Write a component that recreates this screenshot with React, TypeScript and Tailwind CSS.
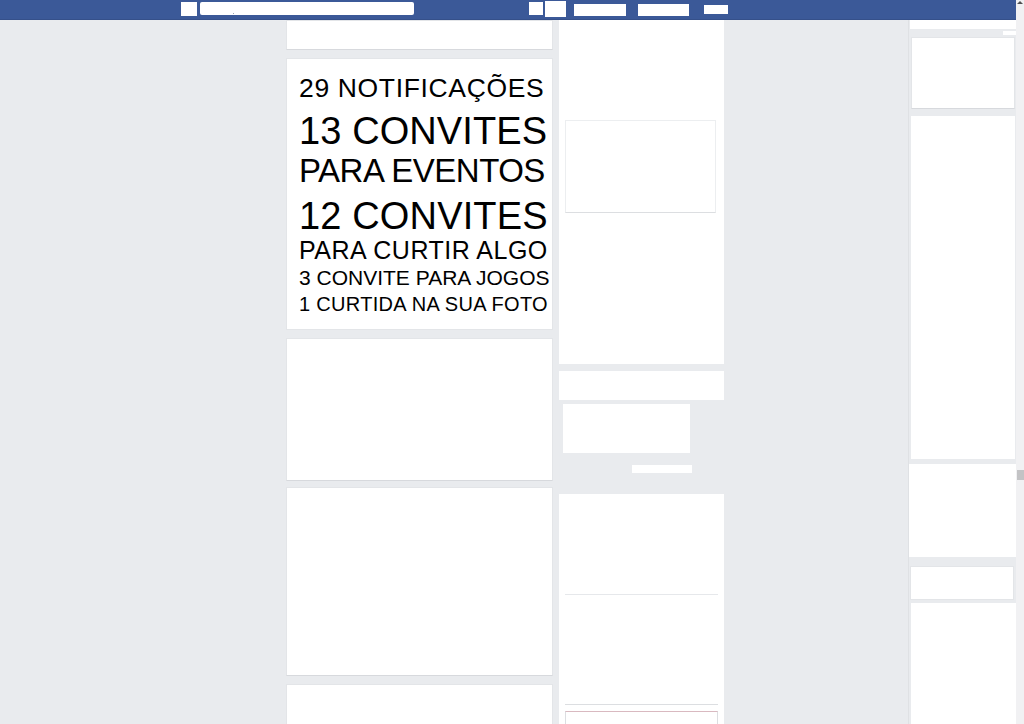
const lines = [
  { text: "29 NOTIFICAÇÕES", cls: "text-[26.5px] tracking-[0.65px]" },
  { text: "13 CONVITES", cls: "mt-[10px] text-[38px] tracking-[0.1px]" },
  { text: "PARA EVENTOS", cls: "mt-[4px] text-[33px] tracking-[-0.5px]" },
  { text: "12 CONVITES", cls: "mt-[10px] text-[38px] tracking-[0.15px]" },
  { text: "PARA CURTIR ALGO", cls: "mt-[3.5px] text-[25px] tracking-[0.5px]" },
  { text: "3 CONVITE PARA JOGOS", cls: "mt-[3.5px] text-[21px] tracking-[0px]" },
  { text: "1 CURTIDA NA SUA FOTO", cls: "mt-[6.8px] text-[20px] tracking-[0.3px]" },
];

function TopBar() {
  return (
    <header className="flex h-[20px] shrink-0 items-start border-b border-[#35508a] bg-[#3b5998]">
      <div className="ml-[181px] mt-[2px] h-[14px] w-[16px] bg-white" />
      <div className="relative ml-[3px] mt-[2px] h-[13px] w-[214px] rounded-[2px] bg-white">
        <span className="absolute left-[33px] top-[11px] h-px w-px bg-[#9aa3b5]" />
      </div>
      <div className="ml-[115px] mt-[2px] h-[13px] w-[14px] bg-white" />
      <div className="ml-[2px] mt-[1px] h-[16px] w-[21px] bg-white" />
      <div className="ml-[8px] mt-[4px] h-[12px] w-[52px] bg-white" />
      <div className="ml-[12px] mt-[4px] h-[12px] w-[51px] bg-white" />
      <div className="ml-[15px] mt-[5px] h-[9px] w-[24px] bg-white" />
    </header>
  );
}

function Card({ className = "" }: { className?: string }) {
  return (
    <div className={`border border-[#e3e5e8] border-b-[#d7d9dd] bg-white ${className}`} />
  );
}

function FeedColumn() {
  return (
    <div className="flex w-[267px] shrink-0 flex-col">
      <Card className="h-[30px]" />

      {/* Notifications card */}
      <div className="mt-[8px] h-[272px] border border-[#e3e5e8] bg-white pl-[12px] pt-[16px] font-['Liberation_Sans',Arial,sans-serif] text-black">
        {lines.map((line, index) => (
          <div key={index} className={`whitespace-nowrap leading-none ${line.cls}`}>
            {line.text}
          </div>
        ))}
      </div>

      <Card className="mt-[8px] h-[143px]" />
      <Card className="mt-[6px] h-[189px]" />
      <Card className="mt-[8px] h-[60px]" />
    </div>
  );
}

function MiddleColumn() {
  return (
    <div className="ml-[6px] flex w-[165px] shrink-0 flex-col">
      <div className="h-[344px] bg-white pt-[100px]">
        <div className="ml-[6px] h-[93px] w-[151px] border border-[#eceef0] border-b-[#dcdee1]" />
      </div>

      <div className="mt-[7px] h-[29px] bg-white" />

      <div className="ml-[4px] mt-[4px] h-[49px] w-[127px] bg-white" />
      <div className="ml-[73px] mt-[12px] h-[8px] w-[60px] bg-white" />

      <div className="mt-[21px] h-[240px] bg-white px-[6px] pt-[100px]">
        <div className="h-px bg-[#e6e8eb]" />
        <div className="mt-[109px] h-px bg-[#dcdee1]" />
        <div className="mt-[6px] h-[30px] border border-[#dcdee1] border-t-[#d9b9c0]" />
      </div>
    </div>
  );
}

function RightColumn() {
  return (
    <div className="ml-[184px] flex w-[109px] shrink-0 flex-col border-l border-[#dfe1e4]">
      <div className="ml-[1px] h-[9px] bg-white" />
      <div className="flex h-[8px] justify-end pt-[2px]">
        <div className="h-[4px] w-[14px] bg-white" />
      </div>
      <Card className="ml-[2px] h-[72px] w-[104px]" />
      <div className="ml-[2px] mt-[7px] h-[343px] w-[104px] bg-white" />
      <div className="mt-[5px] h-[93px] bg-white" />
      <div className="ml-[1px] mt-[9px] h-[34px] w-[104px] border border-[#e3e5e8] bg-white" />
      <div className="ml-[2px] mt-[3px] h-[130px] bg-white" />
    </div>
  );
}

function ScrollBar() {
  return (
    <div className="flex h-full w-[8px] shrink-0 flex-col items-center bg-[#f1f1f3]">
      <div className="mt-[1px] h-0 w-0 border-x-[3px] border-b-[3px] border-x-transparent border-b-[#505050]" />
      <div className="ml-[1px] mt-[466px] h-[10px] w-[7px] bg-[#c3c3c5]" />
    </div>
  );
}

export default function App() {
  return (
    <div className="flex h-[724px] w-[1024px] overflow-hidden bg-[#e9ebee]">
      <div className="flex w-[1016px] shrink-0 flex-col">
        <TopBar />
        <div className="flex items-start pl-[286px]">
          <FeedColumn />
          <MiddleColumn />
          <RightColumn />
        </div>
      </div>
      <ScrollBar />
    </div>
  );
}
